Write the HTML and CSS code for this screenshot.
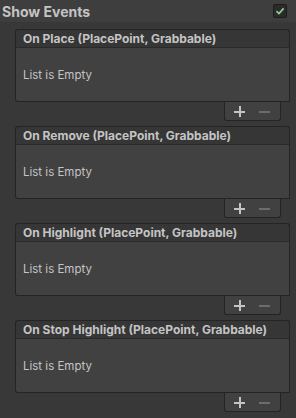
FILE: index.html
```html
<!DOCTYPE html>
<html lang="en">
<head>
  <meta charset="UTF-8">
  <meta name="viewport" content="width=device-width, initial-scale=1.0">
  <title>Show Events</title>
  <link rel="stylesheet" href="styles.css">
</head>
<body>

<div class="foldout">
  <span class="foldout-label">Show Events</span>
  <span class="toggle">
    <svg width="10" height="10" viewBox="0 0 10 10"><path d="M1.5 5.2 L4 7.6 L8.6 2.4" fill="none" stroke="#8fd48f" stroke-width="1.6"/></svg>
  </span>
</div>

<div class="events">
  <div class="event">
    <div class="event-head">On Place (PlacePoint, Grabbable)</div>
    <div class="event-body">List is Empty</div>
    <div class="event-foot">
      <div class="tab"><span class="plus"></span><span class="minus"></span></div>
    </div>
  </div>

  <div class="event">
    <div class="event-head">On Remove (PlacePoint, Grabbable)</div>
    <div class="event-body">List is Empty</div>
    <div class="event-foot">
      <div class="tab"><span class="plus"></span><span class="minus"></span></div>
    </div>
  </div>

  <div class="event">
    <div class="event-head">On Highlight (PlacePoint, Grabbable)</div>
    <div class="event-body">List is Empty</div>
    <div class="event-foot">
      <div class="tab"><span class="plus"></span><span class="minus"></span></div>
    </div>
  </div>

  <div class="event">
    <div class="event-head">On Stop Highlight (PlacePoint, Grabbable)</div>
    <div class="event-body">List is Empty</div>
    <div class="event-foot">
      <div class="tab"><span class="plus"></span><span class="minus"></span></div>
    </div>
  </div>
</div>

</body>
</html>
```

FILE: styles.css
```css
body {
  margin: 0;
  padding: 0;
  background-color: #383838;
  font-family: Inter, "Noto Sans", sans-serif;
  color: #c4c4c4;
}

.foldout {
  height: 22px;
  background-color: #3e3e3e;
  display: flex;
  align-items: center;
  justify-content: space-between;
  padding: 0 9px 0 2px;
}

.foldout-label {
  font-size: 14px;
  font-weight: 700;
}

.toggle {
  width: 12px;
  height: 12px;
  border: 1px solid #1c1c1c;
  border-radius: 2px;
  background-color: #2b2b2b;
  display: flex;
  justify-content: center;
  align-items: center;
}

.events {
  padding: 7px 6px 0 15px;
}

.event {
  margin-bottom: 5px;
}

.event-head {
  height: 17px;
  line-height: 17px;
  background-color: #363636;
  border: 1px solid #242424;
  border-bottom-color: #2a2a2a;
  border-radius: 3px 3px 0 0;
  padding-left: 7px;
  font-size: 12px;
  font-weight: 700;
}

.event-body {
  height: 53px;
  background-color: #414141;
  border: 1px solid #242424;
  border-top: none;
  border-radius: 0 0 0 3px;
  padding-left: 7px;
  display: flex;
  align-items: center;
  font-size: 11.5px;
}

.event-foot {
  display: flex;
  justify-content: flex-end;
  padding-right: 9px;
}

.tab {
  width: 57px;
  height: 19px;
  box-sizing: border-box;
  background-color: #414141;
  border: 1px solid #242424;
  border-top: none;
  border-radius: 0 0 3px 3px;
  display: flex;
  align-items: center;
  gap: 14px;
  padding-left: 9px;
}

.plus, .minus {
  position: relative;
  width: 11px;
  height: 11px;
}

.plus::before, .plus::after, .minus::before {
  content: "";
  position: absolute;
  background-color: #c4c4c4;
}

.plus::before {
  left: 0;
  top: 5px;
  width: 11px;
  height: 2px;
}

.plus::after {
  left: 5px;
  top: 0;
  width: 2px;
  height: 11px;
}

.minus::before {
  left: 0;
  top: 5px;
  width: 11px;
  height: 2px;
  background-color: #6c6c6c;
}
```
